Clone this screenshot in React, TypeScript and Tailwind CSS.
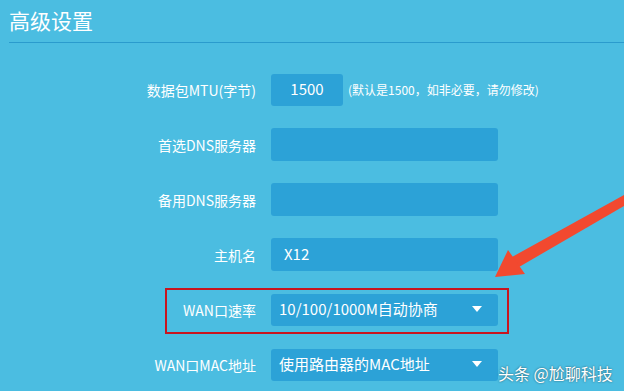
import React from 'react';

const font = { fontFamily: '"Noto Sans CJK SC", "Noto Sans", sans-serif' };

const Caret = () => (
	<svg width="10" height="7" viewBox="0 0 10 7" className="shrink-0">
		<polygon points="0,0 10,0 5,6" fill="#ffffff" />
	</svg>
);

const Row = ({
	label,
	children,
}: {
	label: string;
	children: React.ReactNode;
}) => (
	<div className="flex items-center h-[33px]">
		<div className="w-[256px] text-right text-[14px] text-white leading-none">
			{label}
		</div>
		<div className="ml-[15px] flex items-center">{children}</div>
	</div>
);

const Field = ({ value }: { value?: string }) => (
	<div className="w-[227px] h-[33px] rounded-[3px] bg-[#2ca2d7] flex items-center pl-[13px] text-[15px] text-white">
		{value}
	</div>
);

const Select = ({ value }: { value: string }) => (
	<div className="w-[227px] h-[32px] rounded-[3px] bg-[#2ca2d7] flex items-center justify-between pl-[8px] pr-[16px] text-[15px] text-white">
		<span>{value}</span>
		<Caret />
	</div>
);

export default function App() {
	return (
		<div
			className="relative w-[624px] h-[391px] overflow-hidden bg-[#4bbde1]"
			style={font}>
			<div className="pl-[9px] pt-[5px]">
				<h1 className="text-[21px] leading-[30px] text-white">高级设置</h1>
				<div className="mt-[7px] h-px bg-[#2a9bcd]" />
			</div>

			<div className="flex flex-col gap-[22px] mt-[30px]">
				<Row label="数据包MTU(字节)">
					<div className="w-[72px] h-[32px] rounded-[3px] bg-[#2ca2d7] flex items-center justify-center text-[15px] text-white">
						1500
					</div>
					<span className="ml-[5px] text-[12px] text-white">
						(默认是1500，如非必要，请勿修改)
					</span>
				</Row>
				<Row label="首选DNS服务器">
					<Field />
				</Row>
				<Row label="备用DNS服务器">
					<Field />
				</Row>
				<Row label="主机名">
					<Field value="X12" />
				</Row>
				<Row label="WAN口速率">
					<Select value="10/100/1000M自动协商" />
				</Row>
				<Row label="WAN口MAC地址">
					<Select value="使用路由器的MAC地址" />
				</Row>
			</div>

			{/* annotation box */}
			<div className="absolute left-[165px] top-[288px] w-[344px] h-[46px] border-2 border-[#c8151f]" />

			{/* annotation arrow */}
			<svg
				className="absolute left-0 top-0"
				width="624"
				height="391"
				viewBox="0 0 624 391">
				<polygon points="624,195 624,206 519,267 512,257" fill="#f2492f" />
				<polygon points="495,277 508,250 525,274" fill="#f2492f" />
			</svg>

			<div
				className="absolute left-[498px] top-[361px] text-[16px] text-white"
				style={{ textShadow: '0 0 2px rgba(0,0,0,0.6)' }}>
				头条 @尬聊科技
			</div>
		</div>
	);
}
